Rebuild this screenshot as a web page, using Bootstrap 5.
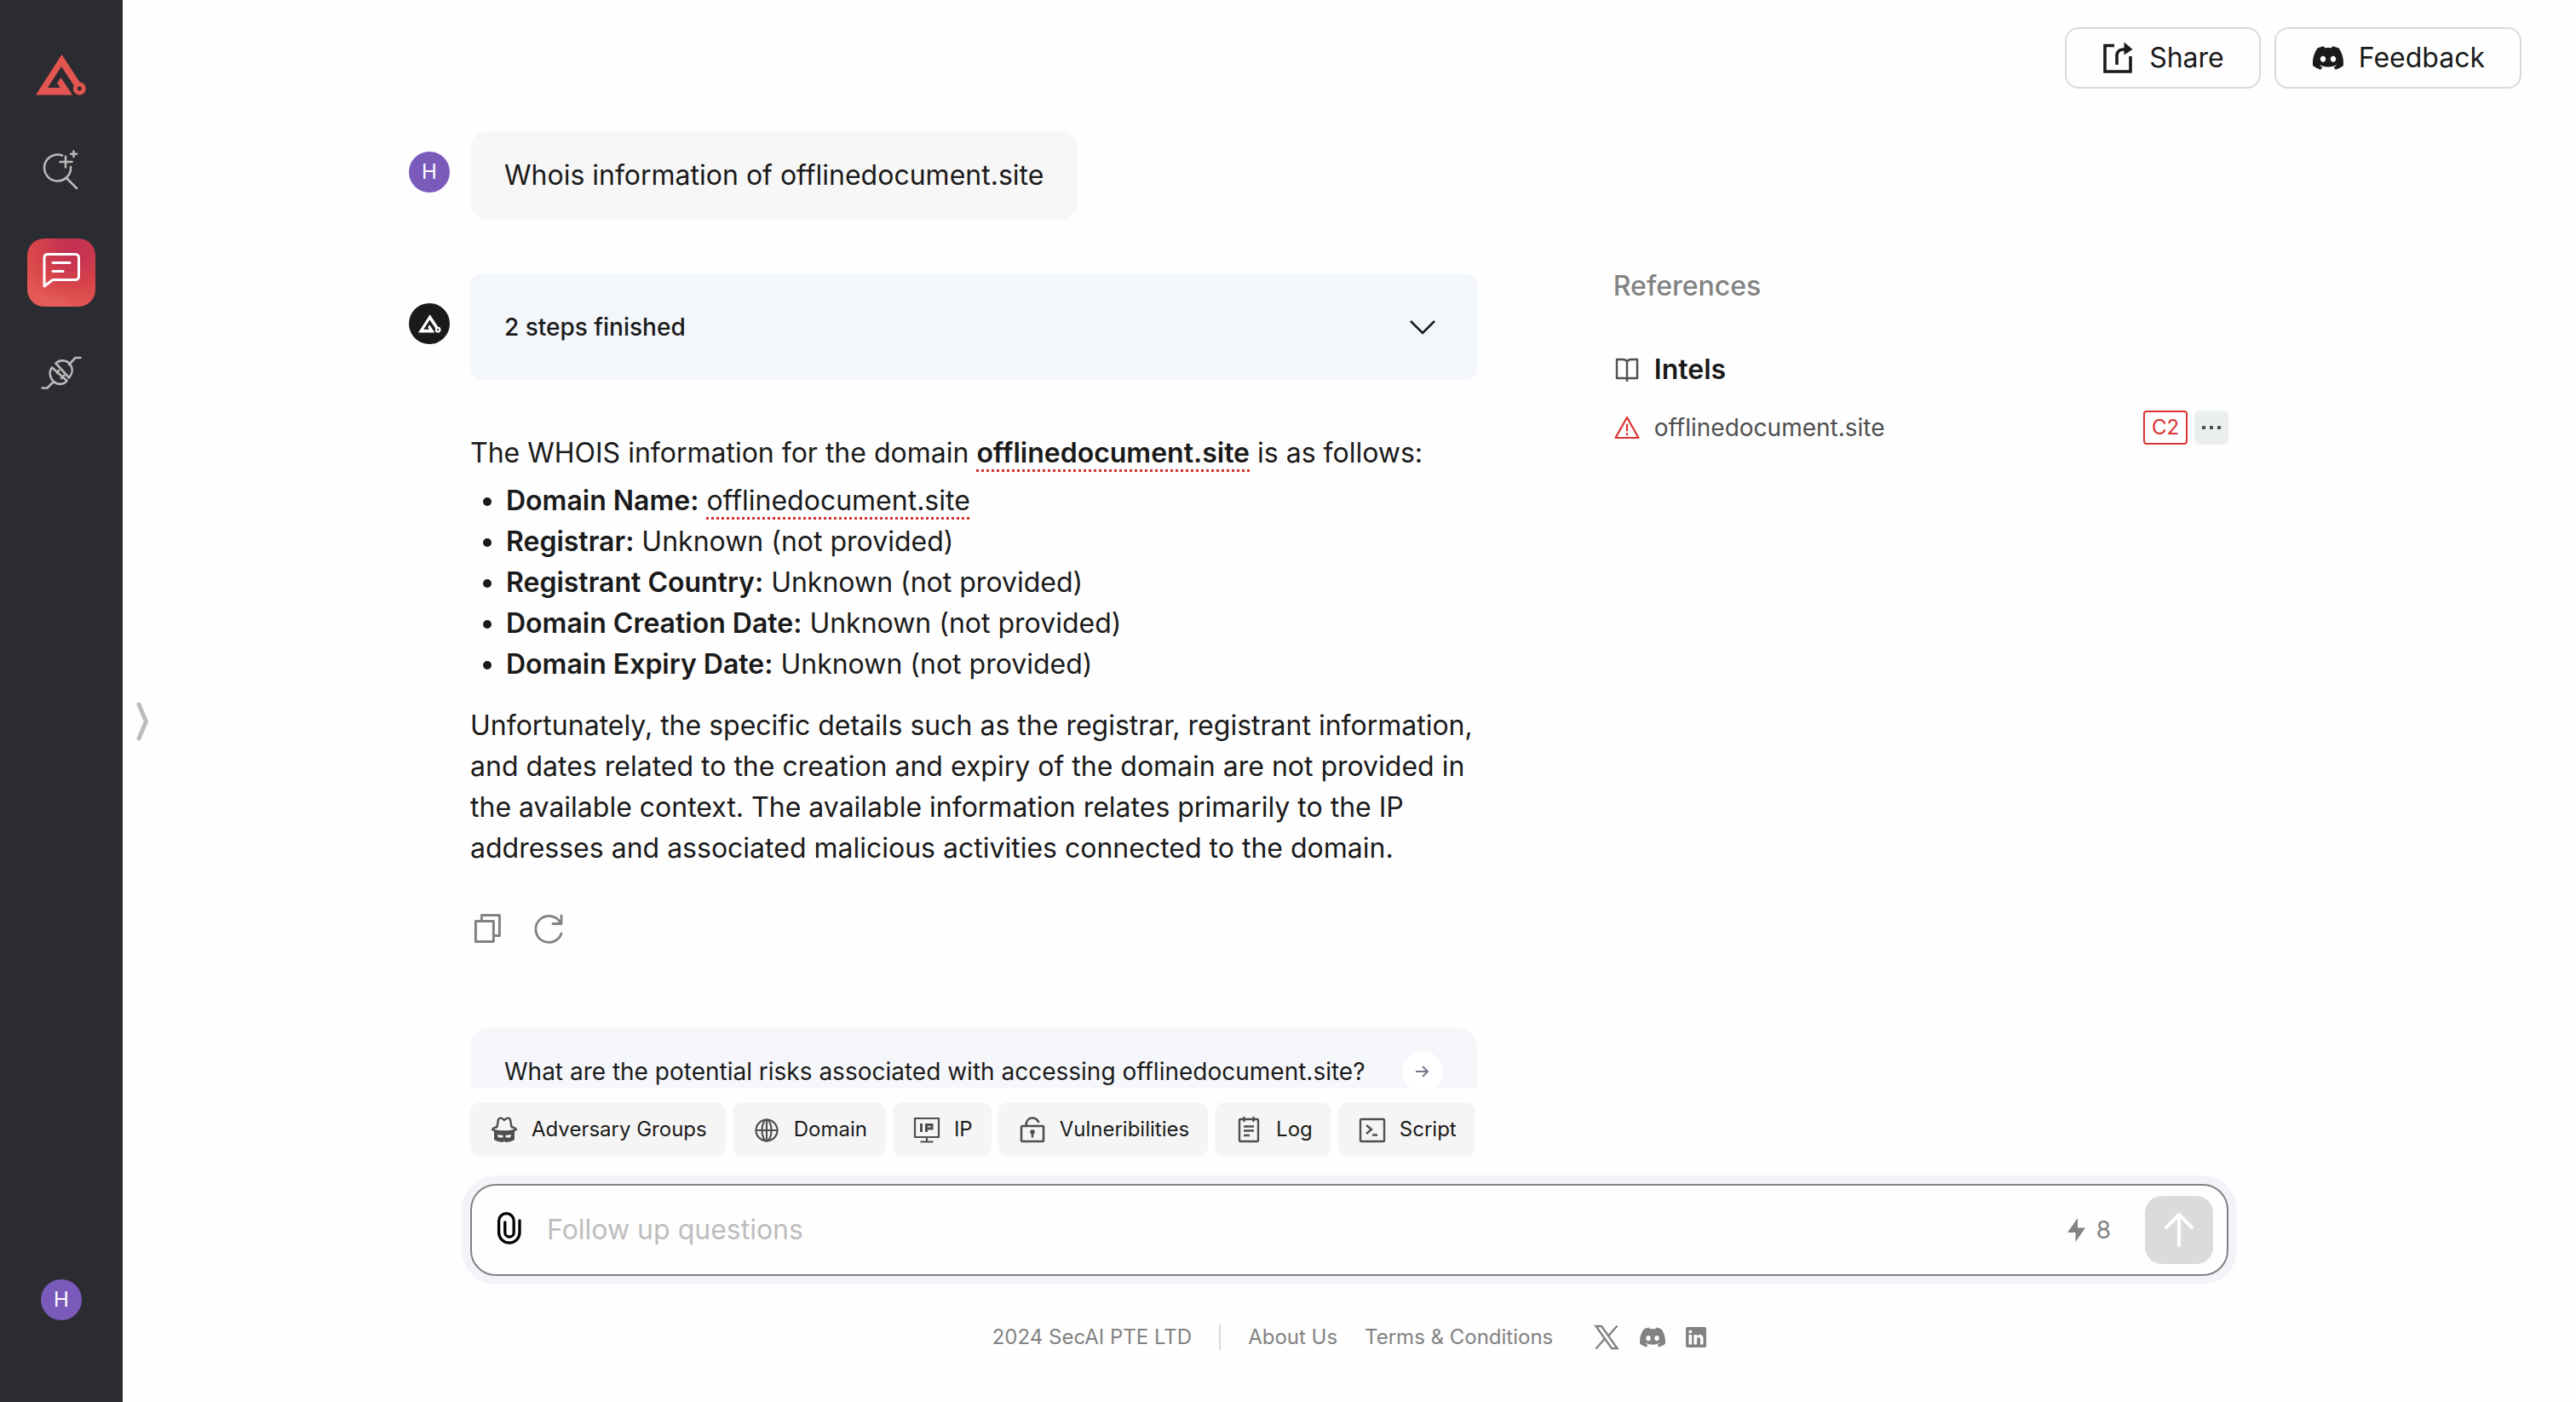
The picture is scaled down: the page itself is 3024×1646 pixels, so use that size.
<!DOCTYPE html>
<html lang="en">
<head>
<meta charset="utf-8">
<meta name="viewport" content="width=device-width, initial-scale=1">
<title>SecAI</title>
<link href="https://cdn.jsdelivr.net/npm/bootstrap@5.3.0/dist/css/bootstrap.min.css" rel="stylesheet">
<style>
  body { font-family: Inter, "Liberation Sans", sans-serif; font-size: 32px; line-height: 48px; color: #1a1a1a; background: #fefefe; }
  svg { display: block; flex: none; }
  .app { height: 100vh; overflow: hidden; }
  .rail { width: 144px; background: #2b2c31; padding: 62px 0 96px; flex: none; }
  .rail-logo { color: #e25550; margin-bottom: 46px; }
  .rail-tiles { gap: 40px; }
  .rail-tile { width: 80px; height: 80px; border-radius: 20px; display: flex; align-items: center; justify-content: center; }
  .rail-tile.active { background: radial-gradient(circle at 68% 14%, #c33052 0%, #c83550 22%, #d64449 50%, rgba(230,92,90,0) 78%), linear-gradient(110deg, #e0524f, #e65f5c 60%, #de4f50); }
  .avatar { width: 48px; height: 48px; border-radius: 50%; background: #7a5abb; color: #fff; font-size: 24px; line-height: 48px; text-align: center; flex: none; display: flex; align-items: center; justify-content: center; }
  .avatar.bot { background: #1a1a1a; }
  .stage { min-width: 0; }
  .scroller { min-height: 0; }
  .expander { width: 46px; height: 60px; left: 144px; top: calc(50% - 7px); transform: translateY(-50%); background: none; border: 0; padding: 0 0 0 13px; }
  .expander { top: 50%; margin-top: 24px; }
  .topbar { padding: 32px 64px 0; gap: 16px; }
  .btn-top { height: 72px; border: 2px solid #dadada; border-radius: 16px; background: #fefefe; font-size: 32px; line-height: 48px; padding: 0 41px; gap: 16px; color: #1a1a1a; display: flex; align-items: center; }
  .lane { width: 100%; max-width: 2208px; margin: 0 auto; padding-right: 72px; }
  .feed { padding-top: 50px; gap: 64px; }
  .turn { gap: 24px; }
  .turn-icon-user { padding-top: 24px; }
  .turn-icon-bot { padding-top: 34px; }
  .bubble { background: #f7f7f7; border-radius: 20px; padding: 28px 40px; }
  .cols { gap: 160px; min-width: 0; }
  .answer { flex: 18 1 0; min-width: 0; }
  .refs { flex: 11 1 0; min-width: 0; }
  .steps { background: #f3f6fb; border: 0; border-radius: 12px; height: 124px; padding: 0 48px 0 40px; font-size: 28px; font-weight: 500; color: #1a1a1a; width: 100%; }
  .prose { padding-top: 62px; padding-bottom: 50px; }
  .prose p { margin: 0; }
  .prose ul { margin: 8px 0 24px; padding-left: 42px; }
  .prose strong { font-weight: 600; }
  .ioc { text-decoration: underline dotted #d9302c 3px; text-underline-offset: 8px; color: inherit; }
  .tools { gap: 32px; padding-bottom: 96px; }
  .tools button { background: none; border: 0; padding: 0; }
  .ask { background: #f6f7fb; border: 0; border-radius: 24px; height: 104px; padding: 0 40px; font-size: 28px; color: #1a1a1a; width: 100%; }
  .ask-go { width: 48px; height: 48px; border-radius: 50%; background: #fff; display: flex; align-items: center; justify-content: center; }
  .refs h2 { font-size: 32px; line-height: 48px; font-weight: 500; color: #828282; margin: -10px 0 50px; }
  .refs h3 { font-size: 32px; line-height: 48px; font-weight: 600; margin: 0; }
  .refs-head { gap: 16px; margin-bottom: 24px; }
  .ref-row { gap: 16px; height: 40px; font-size: 28px; line-height: 40px; color: #4f4f4f; }
  .ref-row a { color: inherit; text-decoration: none; }
  .c2 { border: 2px solid #d93430; color: #d93430; border-radius: 4px; height: 40px; width: 52px; font-size: 24px; line-height: 36px; text-align: center; }
  .dots { background: #eceff0; border: 0; border-radius: 6px; height: 40px; width: 40px; padding: 0; display: flex; align-items: center; justify-content: center; }
  .dock { padding-top: 16px; padding-bottom: 60px; }
  .dock-inner { padding-left: 72px; }
  .chips { gap: 8px; }
  .chip { background: #f5f5f5; border: 0; border-radius: 12px; height: 64px; padding: 0 22px 0 24px; gap: 16px; font-size: 24px; color: #1a1a1a; display: flex; align-items: center; white-space: nowrap; }
  .composer { margin-top: 32px; height: 108px; border: 2px solid #828282; border-radius: 30px; box-shadow: 0 0 0 10px #f3f4fa; background: #fefefe; padding: 0 16px 0 26px; }
  .composer input { border: 0; background: none; outline: 0; flex: 1; font-size: 32px; padding: 0; margin-left: 24px; min-width: 0; }
  .composer input::placeholder { color: #bdbdbd; opacity: 1; }
  .quota { color: #828282; font-size: 28px; gap: 12px; }
  .send { width: 80px; height: 80px; border: 0; border-radius: 20px; background: #dbdbdb; padding: 0; margin-left: 40px; display: flex; align-items: center; justify-content: center; }
  .foot { margin-top: 56px; font-size: 24px; line-height: 32px; color: #828282; }
  .foot a { color: inherit; text-decoration: none; }
  .foot .bar { width: 2px; height: 30px; background: #d9d9d9; margin: 0 32px; }
</style>
</head>
<body>
<svg width="0" height="0" class="position-absolute" aria-hidden="true">
  <symbol id="logo" viewBox="0 0 60 48"><path d="M30.500 0 52 33 45.500 37.500 30 14 14 39H28.700L25 33.500 29.500 27 43 47.500H0Z" fill="currentColor"/><circle cx="51.300" cy="40" r="5" fill="none" stroke="currentColor" stroke-width="5"/></symbol>
  <symbol id="discord" viewBox="0 0 24 24"><path fill="currentColor" d="M20.317 4.370a19.800 19.800 0 0 0-4.885-1.515.07.07 0 0 0-.079.037c-.21.375-.444.864-.608 1.250a18.300 18.300 0 0 0-5.487 0 12.600 12.600 0 0 0-.617-1.250.077.077 0 0 0-.079-.037A19.700 19.700 0 0 0 3.677 4.370C.533 9.046-.32 13.580.099 18.058a.08.08 0 0 0 .031.056 19.900 19.900 0 0 0 5.993 3.030.078.078 0 0 0 .084-.028 14 14 0 0 0 1.226-1.994.076.076 0 0 0-.041-.106 13.100 13.100 0 0 1-1.872-.892.077.077 0 0 1-.008-.128l.372-.292a.074.074 0 0 1 .077-.010c3.928 1.793 8.180 1.793 12.062 0a.074.074 0 0 1 .078.010l.373.292a.077.077 0 0 1-.006.127 12.300 12.300 0 0 1-1.873.892.077.077 0 0 0-.041.107c.36.698.772 1.362 1.225 1.993a.076.076 0 0 0 .084.028 19.800 19.800 0 0 0 6.002-3.030.077.077 0 0 0 .032-.054c.5-5.177-.838-9.674-3.549-13.660ZM8.020 15.330c-1.183 0-2.157-1.085-2.157-2.419s.955-2.419 2.157-2.419c1.210 0 2.176 1.096 2.157 2.420 0 1.333-.956 2.418-2.157 2.418Zm7.975 0c-1.183 0-2.157-1.085-2.157-2.419s.955-2.419 2.157-2.419c1.210 0 2.176 1.096 2.157 2.420 0 1.333-.946 2.418-2.157 2.418Z"/></symbol>
</svg>
<div class="app d-flex">
  <nav class="rail d-flex flex-column align-items-center" aria-label="Main">
    <a href="#" class="rail-logo" aria-label="Home"><svg width="60" height="52"><use href="#logo"/></svg></a>
    <div class="rail-tiles d-flex flex-column">
      <a href="#" class="rail-tile" aria-label="Search"><svg width="44" height="50" viewBox="0 0 44 50" fill="none" stroke="#b9b9b9" stroke-width="2.600" stroke-linecap="round"><path d="M23 7.500A15.500 15.500 0 1 0 33 21M28 34l12 12M27 8.500v13M20.500 15h14M36.500 2.500v6.500M33 5.700h7"/></svg></a>
      <a href="#" class="rail-tile active" aria-label="Chat"><svg width="44" height="48" viewBox="0 0 44 48" fill="none" stroke="#fff" stroke-width="3" stroke-linecap="round" stroke-linejoin="round"><path d="M5.500 2.500h33a4 4 0 0 1 4 4v22a4 4 0 0 1-4 4H12L2 40V6.500a4 4 0 0 1 3.500-4ZM12 12.500h20M12 22.500h12"/></svg></a>
      <a href="#" class="rail-tile" aria-label="Plugins"><svg width="48" height="44" viewBox="0 0 48 44" fill="none" stroke="#b9b9b9" stroke-width="2.600" stroke-linecap="round" stroke-linejoin="round"><path d="M1.500 37.500h6L15 30M33 10l7.500-8h6M17.500 8.500C23 3.500 31 5 34.500 10S37 21 33 25.500ZM13 13.500C9 18 10.500 26 15 30s12 4 15.500-1ZM21 17l-2 3M27 23l-3 3"/></svg></a>
    </div>
    <div class="avatar mt-auto">H</div>
  </nav>
  <button class="expander position-absolute" type="button" aria-label="Expand sidebar"><svg width="20" height="50" viewBox="0 0 20 50" fill="none" stroke="#bdbdbd" stroke-width="5" stroke-linecap="round" stroke-linejoin="round"><path d="M6 5l8.500 20L6 45"/></svg></button>

  <div class="stage d-flex flex-column flex-grow-1">
    <main class="scroller flex-grow-1 overflow-hidden">
      <div class="topbar d-flex justify-content-end">
        <button type="button" class="btn-top"><svg width="40" height="40" viewBox="0 0 40 40" fill="none" stroke="#1a1a1a" stroke-width="3.600"><path d="M15 5.500H4V36H34V18M18 28V17a7 7 0 0 1 7-7h4"/><path d="M26.500 1.500v15l10-6.500Z" fill="#1a1a1a" stroke="none"/></svg>Share</button>
        <button type="button" class="btn-top"><svg width="40" height="36"><use href="#discord"/></svg>Feedback</button>
      </div>
      <div class="feed lane d-flex flex-column">
        <div class="turn d-flex">
          <div class="turn-icon-user"><div class="avatar">H</div></div>
          <div class="bubble">Whois information of offlinedocument.site</div>
        </div>
        <div class="turn d-flex">
          <div class="turn-icon-bot"><div class="avatar bot"><svg width="27" height="22"><use href="#logo"/></svg></div></div>
          <div class="cols d-flex flex-grow-1">
            <article class="answer">
              <button type="button" class="steps d-flex align-items-center justify-content-between">2 steps finished<svg width="32" height="20" viewBox="0 0 32 20" fill="none" stroke="#1a1a1a" stroke-width="2.600"><path d="M2 3l14 14L30 3"/></svg></button>
              <div class="prose">
                <p>The WHOIS information for the domain <strong class="ioc">offlinedocument.site</strong> is as follows:</p>
                <ul>
                  <li><strong>Domain Name:</strong> <span class="ioc">offlinedocument.site</span></li>
                  <li><strong>Registrar:</strong> Unknown (not provided)</li>
                  <li><strong>Registrant Country:</strong> Unknown (not provided)</li>
                  <li><strong>Domain Creation Date:</strong> Unknown (not provided)</li>
                  <li><strong>Domain Expiry Date:</strong> Unknown (not provided)</li>
                </ul>
                <p>Unfortunately, the specific details such as the registrar, registrant information, and dates related to the creation and expiry of the domain are not provided in the available context. The available information relates primarily to the IP addresses and associated malicious activities connected to the domain.</p>
              </div>
              <div class="tools d-flex">
                <button type="button" aria-label="Copy"><svg width="40" height="40" viewBox="0 0 40 40" fill="none" stroke="#828282" stroke-width="3" stroke-linejoin="round"><path d="M6.400 11.400h21v24h-21ZM13.400 11V4.400h21v24H28"/></svg></button>
                <button type="button" aria-label="Regenerate"><svg width="40" height="40" viewBox="0 0 40 40" fill="none" stroke="#828282" stroke-width="2.800" stroke-linecap="round" stroke-linejoin="round"><path d="M35 26A15.500 15.500 0 1 1 34 13.500M35 5v9.500H25"/></svg></button>
              </div>
              <button type="button" class="ask d-flex align-items-center justify-content-between">What are the potential risks associated with accessing offlinedocument.site?<span class="ask-go"><svg width="18" height="16" viewBox="0 0 18 16" fill="none" stroke="#6f7788" stroke-width="2"><path d="M1 8h14M9 2l6 6-6 6"/></svg></span></button>
            </article>
            <aside class="refs">
              <h2>References</h2>
              <div class="refs-head d-flex align-items-center"><svg width="32" height="32" viewBox="0 0 32 32" fill="none" stroke="#4f4f4f" stroke-width="2.400" stroke-linejoin="round"><path d="M16 6.500C15 4.500 13 4 11 4H4v22h12 12V4h-7c-2 0-4 .5-5 2.500V30"/></svg><h3>Intels</h3></div>
              <div class="ref-row d-flex align-items-center"><svg width="32" height="32" viewBox="0 0 32 32" fill="none" stroke="#d93430" stroke-width="2.200" stroke-linecap="round" stroke-linejoin="round"><path d="M16 4 29.500 28h-27ZM16 12.500v7M16 23v1.500"/></svg><a href="#">offlinedocument.site</a>
                <div class="d-flex gap-2 ms-auto"><span class="c2">C2</span><button type="button" class="dots" aria-label="More"><svg width="22" height="4" fill="#4f4f4f"><path d="M0 0h4v4H0ZM9 0h4v4H9ZM18 0h4v4h-4Z"/></svg></button></div>
              </div>
            </aside>
          </div>
        </div>
      </div>
    </main>

    <div class="dock lane"><div class="dock-inner">
      <div class="chips d-flex">
        <button type="button" class="chip"><svg width="32" height="32" viewBox="0 0 32 32" fill="none" stroke="#4f4f4f" stroke-width="2.400" stroke-linejoin="round"><path d="M2 16c1-2 4-2.500 5.500-3L9 4.500C10 1.500 13 2.500 16 5c3-2.500 6-3.500 7-.5l1.500 8.500c1.500.5 4.500 1 5.500 3-3 2-8 2.500-14 2.500S5 18 2 16Z"/><path fill="#4f4f4f" stroke="none" fill-rule="evenodd" d="M4 17c7 2.500 17 2.500 24 0v11c-3 2-7 3-10.500 3L16 29.500 14.500 31C11 31 7 30 4 28ZM8 22l1 3.500h5.500V23ZM24 22l-1 3.500h-5.500V23Z"/></svg>Adversary Groups</button>
        <button type="button" class="chip"><svg width="32" height="32" viewBox="0 0 32 32" fill="none" stroke="#4f4f4f" stroke-width="2.200"><circle cx="16" cy="17" r="12.500"/><ellipse cx="16" cy="17" rx="5.500" ry="12.500"/><path d="M3.500 17h25M16 4.500v25"/></svg>Domain</button>
        <button type="button" class="chip"><svg width="32" height="32" viewBox="0 0 32 32" fill="none" stroke="#4f4f4f" stroke-width="2.200"><path d="M2 3h28v22H2ZM16 25v5M8.500 30.500h15"/><path stroke-width="3" d="M9.500 9v10M15.500 19V10.500h6.500v4.500h-6"/></svg>IP</button>
        <button type="button" class="chip"><svg width="32" height="32" viewBox="0 0 32 32" fill="none" stroke="#4f4f4f" stroke-width="2.600"><rect x="3" y="12" width="26" height="18" rx="1"/><path d="M8.500 12c0-6 3-9.500 7.500-9.500 4 0 6 2 7.500 5.500M16 19v6.500"/><circle cx="16" cy="19" r="1.500" fill="#4f4f4f"/></svg>Vulneribilities</button>
        <button type="button" class="chip"><svg width="32" height="32" viewBox="0 0 32 32" fill="none" stroke="#4f4f4f" stroke-width="2.400"><rect x="5" y="4" width="22" height="26" rx="1"/><path d="M10.500 1v6M21.500 1v6M10 12.500h12M10 17.500h12M10 23h7"/></svg>Log</button>
        <button type="button" class="chip"><svg width="32" height="32" viewBox="0 0 32 32" fill="none" stroke="#4f4f4f" stroke-width="2.400"><rect x="2" y="4" width="28" height="26" rx="1"/><path d="M9 11l6 5-6 5M16 22.500h6"/></svg>Script</button>
      </div>
      <form class="composer d-flex align-items-center">
        <svg width="38" height="44" viewBox="0 0 38 44" fill="none" stroke="#000" stroke-width="3.300" stroke-linecap="round"><path d="M30 11v14a12.200 12.200 0 0 1-24.400 0V11.500a8.800 8.800 0 0 1 17.600 0V25a5.200 5.200 0 0 1-10.400 0V13"/></svg>
        <input type="text" aria-label="Follow up questions" placeholder="Follow up questions">
        <div class="quota d-flex align-items-center"><svg width="22" height="30" viewBox="0 0 22 30" fill="#828282"><path d="M12 1 0 18h9.500v11L21 12.500h-9Z"/></svg>8</div>
        <button type="button" class="send" aria-label="Send"><svg width="40" height="44" viewBox="0 0 40 44" fill="none" stroke="#fff" stroke-width="4" stroke-linecap="round" stroke-linejoin="round"><path d="M20 40V4M5 19 20 4l15 15"/></svg></button>
      </form>
      <footer class="foot d-flex align-items-center justify-content-center">
        <span>2024 SecAI PTE LTD</span><span class="bar"></span>
        <a href="#" class="me-4 pe-2">About Us</a><a href="#" class="me-5">Terms &amp; Conditions</a>
        <a href="#" class="me-4" aria-label="X"><svg width="30" height="30" viewBox="0 0 30 30" fill="none" stroke="#828282" stroke-width="2.400"><path d="M2.500 2h6.500l18.500 26H21ZM27.500 1.500 17 13.500M2.500 28.500 13 16.500"/></svg></a>
        <a href="#" class="me-4" aria-label="Discord"><svg width="30" height="30"><use href="#discord"/></svg></a>
        <a href="#" aria-label="LinkedIn"><svg width="24" height="24" viewBox="0 0 24 24"><path fill="#828282" fill-rule="evenodd" d="M2 0h20a2 2 0 0 1 2 2v20a2 2 0 0 1-2 2H2a2 2 0 0 1-2-2V2a2 2 0 0 1 2-2Zm1.500 9v11.500h3.600V9Zm1.800-5.600a2 2 0 1 0 .01 4 2 2 0 0 0-.01-4ZM9.400 9v11.500H13v-6c0-3.200 4-3.200 4 0v6h3.500v-7c0-5.500-5.500-5.500-7.500-2.800V9Z"/></svg></a>
      </footer>
    </div></div>
  </div>
</div>
<script src="https://cdn.jsdelivr.net/npm/bootstrap@5.3.0/dist/js/bootstrap.bundle.min.js"></script>
</body>
</html>
